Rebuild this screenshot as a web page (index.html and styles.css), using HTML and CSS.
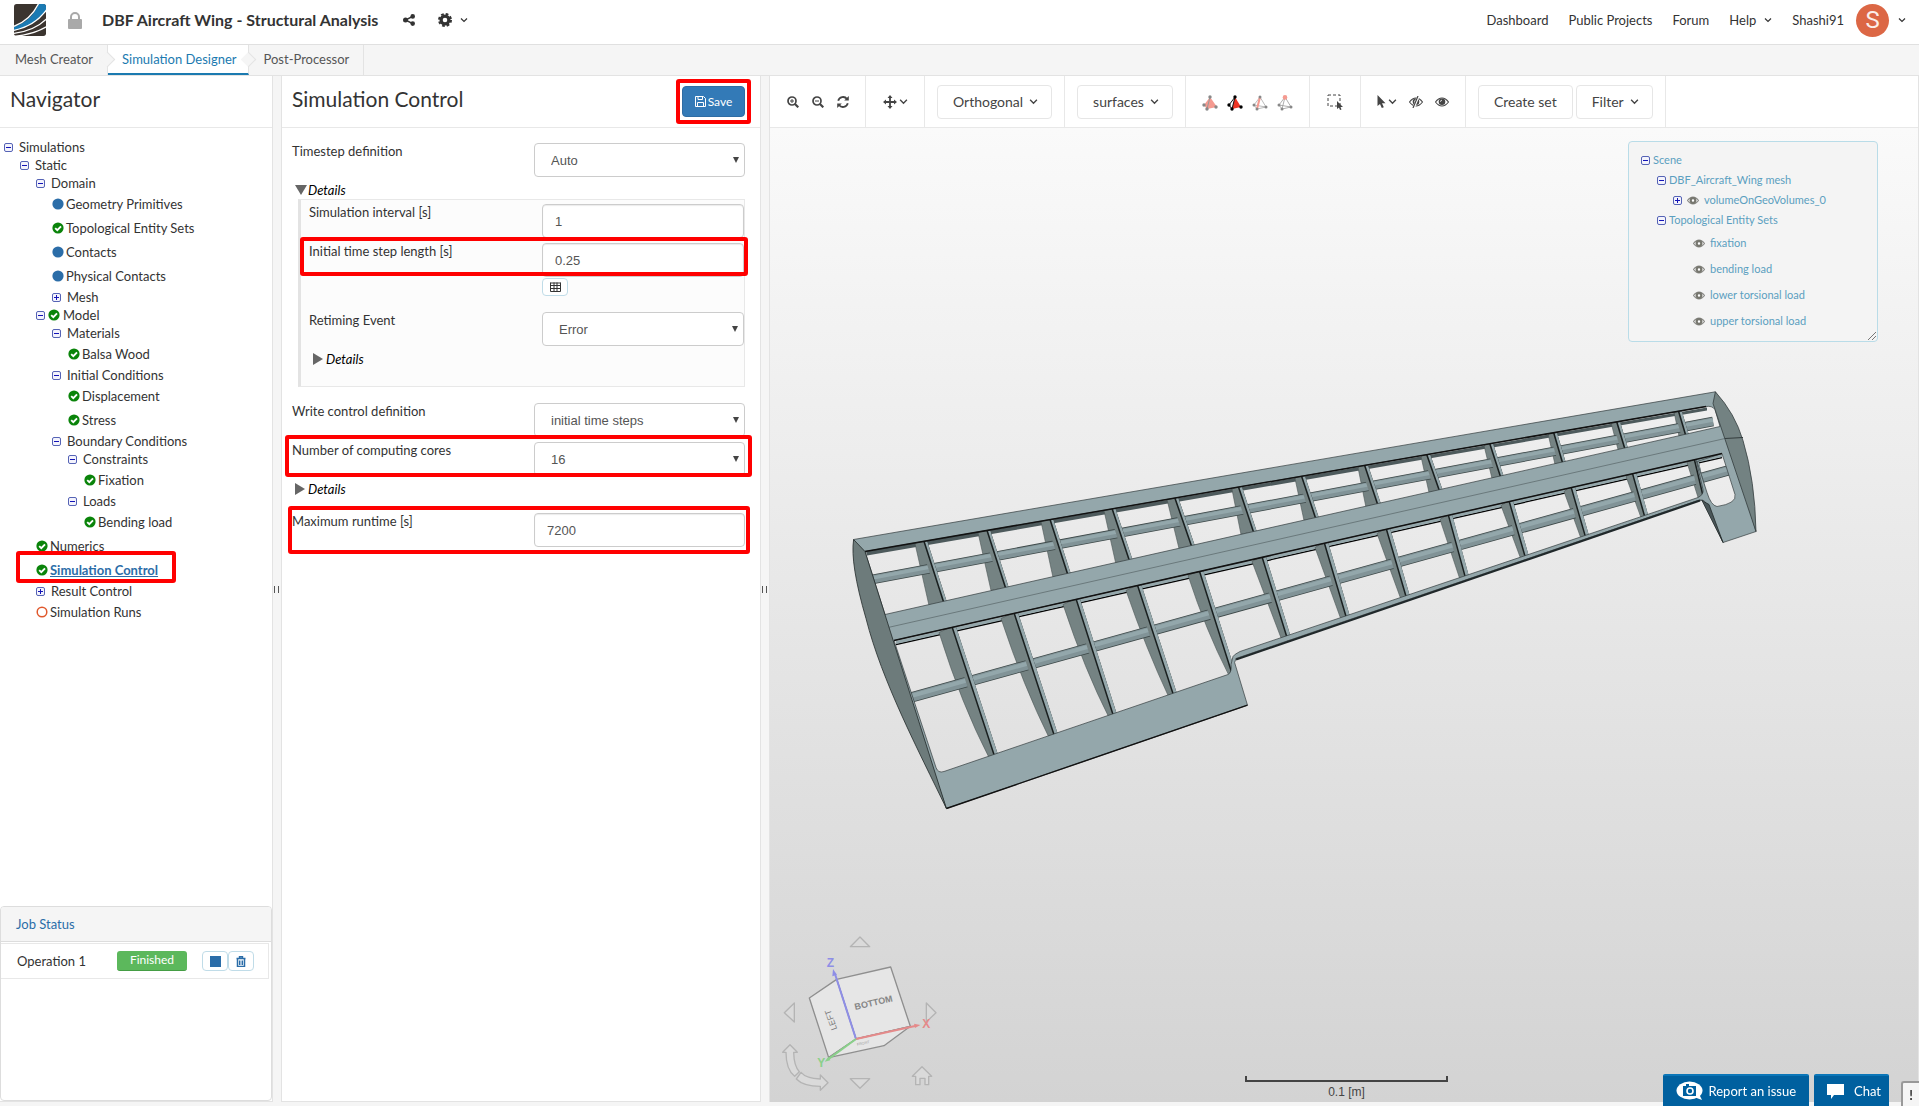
FILE: index.html
```html
<!DOCTYPE html>
<html lang="en">
<head>
<meta charset="utf-8">
<title>DBF Aircraft Wing - Structural Analysis</title>
<link rel="stylesheet" href="styles.css">
</head>
<body>
<svg class="sprite" width="0" height="0" aria-hidden="true">
  <symbol id="chev" viewBox="0 0 8 8"><path d="M1 2.5 4 5.5 7 2.5" fill="none" stroke="currentColor" stroke-width="1.2"/></symbol>
  <symbol id="minus" viewBox="0 0 9 9"><rect x=".5" y=".5" width="8" height="8" rx="1.5" fill="#f3f3fc" stroke="#5563b5"/><path d="M2 4.5h5" stroke="#1414b8"/></symbol>
  <symbol id="plus" viewBox="0 0 9 9"><rect x=".5" y=".5" width="8" height="8" rx="1.5" fill="#f3f3fc" stroke="#5563b5"/><path d="M2 4.5h5M4.5 2v5" stroke="#1414b8"/></symbol>
  <symbol id="ok" viewBox="0 0 12 12"><circle cx="6" cy="6" r="5.6" fill="#0a840a"/><path d="M3.2 6.1 5.3 8.1 9 4.3" fill="none" stroke="#fff" stroke-width="1.9"/></symbol>
  <symbol id="dot" viewBox="0 0 12 12"><circle cx="6" cy="6" r="5.6" fill="#2b6da8"/></symbol>
  <symbol id="ring" viewBox="0 0 12 12"><circle cx="6" cy="6" r="4.8" fill="none" stroke="#e0582c" stroke-width="1.5"/></symbol>
  <symbol id="eye" viewBox="0 0 14 10"><path d="M.5 5Q3.500 1 7 1T13.500 5Q10.500 9 7 9T.5 5Z" fill="none" stroke="currentColor" stroke-width="1.100"/><circle cx="7" cy="4.800" r="3.300" fill="currentColor"/><path d="M5.500 4.800A1.500 1.500 0 0 1 7 3.200" fill="none" stroke="#fff" stroke-width=".8"/></symbol>
  <symbol id="eyes" viewBox="0 0 14 10"><path d="M.5 5Q3.500 1 7 1T13.500 5Q10.500 9 7 9T.5 5Z" fill="none" stroke="#8a8a86" stroke-width="1.300"/><circle cx="7" cy="5" r="2.700" fill="#fff" stroke="#77776f" stroke-width="2.600"/></symbol>
</svg>

<header class="topbar">
  <a href="#" class="logo" aria-label="Home"><svg width="32" height="32" viewBox="0 0 96 96"><defs><clipPath id="lc"><rect width="96" height="96" rx="8"/></clipPath></defs><g clip-path="url(#lc)"><rect width="96" height="96" fill="#3b342f"/><path d="M0 68Q52 52 74 0H96V18Q64 66 0 79Z" fill="#1a7ab3"/><path d="M0 67Q50 48 74-2" fill="none" stroke="#fff" stroke-width="4"/><path d="M0 79Q62 66 98 17" fill="none" stroke="#fff" stroke-width="4"/><path d="M0 88Q62 80 98 44M0 97Q58 92 98 68" fill="none" stroke="#fff" stroke-width="4"/></g></svg></a>
  <svg class="lock" width="14" height="17" viewBox="0 0 14 17"><rect y="7" width="14" height="10" rx="1" fill="#a9a9a9"/><path d="M3 8V5a4 4 0 0 1 8 0v3" fill="none" stroke="#a9a9a9" stroke-width="2"/></svg>
  <h1>DBF Aircraft Wing - Structural Analysis</h1>
  <button class="plain share" aria-label="Share"><svg width="12" height="12" viewBox="0 0 12 12" fill="#333"><circle cx="2.500" cy="6" r="2.500"/><circle cx="9.700" cy="2.400" r="2.300"/><circle cx="9.700" cy="9.600" r="2.300"/><path d="M9.700 2.400 2.500 6l7.200 3.600" fill="none" stroke="#333" stroke-width="1.500"/></svg></button>
  <button class="plain gear" aria-label="Settings"><svg width="14" height="14" viewBox="0 0 14 14"><circle cx="7" cy="7" r="3.900" fill="none" stroke="#333" stroke-width="3.200"/><circle cx="7" cy="7" r="6" fill="none" stroke="#333" stroke-width="2" stroke-dasharray="2.700 2.012"/></svg><svg class="c" width="8" height="8"><use href="#chev"/></svg></button>
  <nav class="links">
    <a href="#">Dashboard</a><a href="#">Public Projects</a><a href="#">Forum</a><a href="#" class="help">Help <svg width="8" height="8"><use href="#chev"/></svg></a><a href="#" class="user">Shashi91 <span class="avatar">S</span><svg width="8" height="8"><use href="#chev"/></svg></a>
  </nav>
</header>

<nav class="tabs">
  <a href="#">Mesh Creator</a>
  <a href="#" class="on">Simulation Designer</a>
  <a href="#">Post-Processor</a>
</nav>

<main class="work">
  <aside class="panel nav">
    <h2 class="head">Navigator</h2>
    <ul class="tree">
      <li><div class="r"><svg><use href="#minus"/></svg>Simulations</div>
      <ul>
        <li><div class="r"><svg><use href="#minus"/></svg>Static</div>
        <ul>
          <li><div class="r"><svg><use href="#minus"/></svg>Domain</div>
          <ul>
            <li class="leaf"><svg><use href="#dot"/></svg>Geometry Primitives</li>
            <li class="leaf"><svg><use href="#ok"/></svg>Topological Entity Sets</li>
            <li class="leaf"><svg><use href="#dot"/></svg>Contacts</li>
            <li class="leaf"><svg><use href="#dot"/></svg>Physical Contacts</li>
            <li><div class="r"><svg><use href="#plus"/></svg>Mesh</div></li>
          </ul></li>
          <li><div class="r model"><svg><use href="#minus"/></svg><svg class="st"><use href="#ok"/></svg>Model</div>
          <ul>
            <li><div class="r"><svg><use href="#minus"/></svg>Materials</div>
              <ul><li class="leaf"><svg><use href="#ok"/></svg>Balsa Wood</li></ul></li>
            <li><div class="r"><svg><use href="#minus"/></svg>Initial Conditions</div>
              <ul><li class="leaf"><svg><use href="#ok"/></svg>Displacement</li><li class="leaf"><svg><use href="#ok"/></svg>Stress</li></ul></li>
            <li><div class="r"><svg><use href="#minus"/></svg>Boundary Conditions</div>
              <ul>
                <li><div class="r"><svg><use href="#minus"/></svg>Constraints</div><ul><li class="leaf"><svg><use href="#ok"/></svg>Fixation</li></ul></li>
                <li><div class="r"><svg><use href="#minus"/></svg>Loads</div><ul><li class="leaf"><svg><use href="#ok"/></svg>Bending load</li></ul></li>
              </ul></li>
          </ul></li>
          <li class="leaf"><svg><use href="#ok"/></svg>Numerics</li>
          <li class="leaf"><svg><use href="#ok"/></svg><a href="#" class="cur">Simulation Control</a><span class="mark m-nav"></span></li>
          <li><div class="r"><svg><use href="#plus"/></svg>Result Control</div></li>
          <li class="leaf"><svg><use href="#ring"/></svg>Simulation Runs</li>
        </ul></li>
      </ul></li>
    </ul>
    <section class="jobs">
      <h3>Job Status</h3>
      <div class="job"><span class="op">Operation 1</span><span class="badge">Finished</span>
        <button class="mini" aria-label="Stop"><svg width="11" height="11"><rect width="11" height="11" fill="#2b6da8"/></svg></button><button class="mini" aria-label="Delete"><svg width="10" height="11" viewBox="0 0 10 11"><path d="M.5 2.500h9M3.500 2.500V.7h3v1.800" fill="none" stroke="#2b6da8" stroke-width="1.400"/><path d="M1.500 3v7.400h7V3M3.700 4.500v4.500M6.300 4.500v4.500" fill="none" stroke="#2b6da8" stroke-width="1.500"/></svg></button>
      </div>
    </section>
  </aside>
  <div class="split"></div>

  <section class="panel sim">
    <div class="head"><h2>Simulation Control</h2>
      <div class="savebox"><button class="save"><svg width="11" height="11" viewBox="0 0 11 11" fill="none" stroke="#fff"><path d="M.5.5h8l2 2v8H.5zM2.500 10.500v-4h6v4M3 .5v3h4.500v-3"/></svg>Save</button><span class="mark m-save"></span></div>
    </div>
    <form class="form">
      <div class="row"><label for="ts">Timestep definition</label><span class="sel"><select id="ts"><option>Auto</option></select></span></div>
      <div class="det"><i class="down"></i>Details</div>
      <div class="box">
        <div class="row"><label for="si">Simulation interval [s]</label><input id="si" value="1"></div>
        <div class="row"><label for="it">Initial time step length [s]</label><input id="it" value="0.25"><span class="mark m-it"></span></div>
        <div class="tb"><button type="button" class="mini" aria-label="Table"><svg width="11" height="10" viewBox="0 0 11 10" fill="none" stroke="#333"><path d="M.5 1h10M.5 3.500h10M.5 6.500h10M.5 9.500h10M.5.5v9M4 .5v9M7 .5v9M10.500.5v9"/></svg></button></div>
        <div class="row"><label for="re">Retiming Event</label><span class="sel"><select id="re"><option>Error</option></select></span></div>
        <div class="det"><i></i>Details</div>
      </div>
      <div class="row"><label for="wc">Write control definition</label><span class="sel"><select id="wc"><option>initial time steps</option></select></span></div>
      <div class="row"><label for="nc">Number of computing cores</label><span class="sel"><select id="nc"><option>16</option></select></span><span class="mark m-nc"></span></div>
      <div class="det cores"><i></i>Details</div>
      <div class="row"><label for="mr">Maximum runtime [s]</label><input id="mr" value="7200"><span class="mark m-mr"></span></div>
    </form>
  </section>
  <div class="split"></div>

  <section class="view">
    <div class="tools">
      <div class="g g1">
        <button class="plain" aria-label="Zoom in"><svg width="12" height="12" viewBox="0 0 12 12" fill="none" stroke="#444"><circle cx="5" cy="5" r="4" stroke-width="1.700"/><path d="M8 8l3.300 3.300" stroke-width="2.200"/><path d="M3 5h4M5 3v4"/></svg></button>
        <button class="plain" aria-label="Zoom out"><svg width="12" height="12" viewBox="0 0 12 12" fill="none" stroke="#444"><circle cx="5" cy="5" r="4" stroke-width="1.700"/><path d="M8 8l3.300 3.300" stroke-width="2.200"/><path d="M3 5h4"/></svg></button>
        <button class="plain" aria-label="Refresh"><svg width="12" height="12" viewBox="0 0 12 12" fill="none" stroke="#444" stroke-width="1.800"><path d="M1.200 4.800A5 5 0 0 1 10 3M10.800 7.200A5 5 0 0 1 2 9"/><path d="M11.800 0v4.600H7.200zM.2 12V7.400h4.600z" fill="#444" stroke="none"/></svg></button>
      </div>
      <div class="g g2"><button class="plain" aria-label="Move"><svg width="14" height="14" viewBox="0 0 14 14"><path d="M7 2v10M2 7h10" stroke="#444" stroke-width="1.800"/><path d="M7 0l2.500 3h-5zM7 14l2.500-3h-5zM0 7l3-2.500v5zM14 7l-3-2.500v5z" fill="#444"/></svg><svg width="9" height="9"><use href="#chev"/></svg></button></div>
      <div class="g"><button class="btn drop">Orthogonal<svg width="9" height="9"><use href="#chev"/></svg></button></div>
      <div class="g"><button class="btn drop">surfaces<svg width="9" height="9"><use href="#chev"/></svg></button></div>
      <div class="g g4">
        <button class="plain" aria-label="Volumes"><svg width="16" height="16" viewBox="0 0 16 16"><path d="M8 2 2 10l3 4 10-2z" fill="#f59a90"/><path d="M8 2 5 14" stroke="#999"/><g fill="#888"><circle cx="8" cy="2" r="1.700"/><circle cx="2" cy="10" r="1.700"/><circle cx="5" cy="14" r="1.700"/><circle cx="14" cy="12" r="1.700"/></g></svg></button>
        <button class="plain" aria-label="Faces"><svg width="16" height="16" viewBox="0 0 16 16"><path d="M8 2 5 14l9-2z" fill="#ee3423"/><path d="M8 2 2 10l3 4z" fill="none" stroke="#111"/><g fill="#000"><circle cx="8" cy="2" r="1.700"/><circle cx="2" cy="10" r="1.700"/><circle cx="5" cy="14" r="1.700"/><circle cx="14" cy="12" r="1.700"/></g></svg></button>
        <button class="plain" aria-label="Edges"><svg width="16" height="16" viewBox="0 0 16 16"><path d="M8 2 2 10l3 4 9-2zM2 10l12 2" fill="none" stroke="#aaa" stroke-width=".8"/><path d="M8 2 5 14" stroke="#f59a90" stroke-width="2"/><g fill="#888"><circle cx="8" cy="2" r="1.500"/><circle cx="2" cy="10" r="1.500"/><circle cx="5" cy="14" r="1.500"/><circle cx="14" cy="12" r="1.500"/></g></svg></button>
        <button class="plain" aria-label="Nodes"><svg width="16" height="16" viewBox="0 0 16 16"><path d="M8 2 2 10l3 4 9-2zM2 10l12 2M8 2 5 14" fill="none" stroke="#999" stroke-width=".8"/><g fill="#888"><circle cx="2" cy="10" r="1.500"/><circle cx="5" cy="14" r="1.500"/><circle cx="14" cy="12" r="1.500"/></g><circle cx="8" cy="2.400" r="2.300" fill="#f59a90"/></svg></button>
      </div>
      <div class="g g5"><button class="plain" aria-label="Box select"><svg width="16" height="16" viewBox="0 0 16 16"><rect x="1" y="1" width="12" height="11" fill="none" stroke="#444" stroke-dasharray="3 2"/><path d="M10 7v8l2-1.500 1 2.500 1.500-.6-1-2.400H16z" fill="#444"/></svg></button></div>
      <div class="g g6">
        <button class="plain" aria-label="Pick"><svg width="9" height="13" viewBox="0 0 9 13"><path d="M.5 0v11L3 9l1.800 4 2-.8L5 8.200h3.500z" fill="#444"/></svg><svg width="9" height="9"><use href="#chev"/></svg></button>
        <button class="plain" aria-label="Hide"><svg width="14" height="12" viewBox="0 -1 14 12" color="#444"><use href="#eye" width="14" height="10"/><path d="M9.500-1 4.500 11" stroke="#fff" stroke-width="2.500"/><path d="M9-1 4 11" stroke="#444" stroke-width="1.200"/></svg></button>
        <button class="plain" aria-label="Show"><svg width="14" height="10"><use href="#eye"/></svg></button>
      </div>
      <div class="g g7"><button class="btn">Create set</button><button class="btn drop">Filter<svg width="9" height="9"><use href="#chev"/></svg></button></div>
    </div>
    <div class="canvas">
      <svg class="wing" viewBox="770 128 1148 973" role="img" aria-label="Wing mesh">
        <defs>
          <path id="ur" d="M923 537 944 602M986 526 1006 588M1049 515 1068 574M1111 504 1130 561M1174 494 1192 546M1238 484 1254 532M1301 473 1316 518M1364 462 1378 504M1426 451 1440 491M1489 440 1501 477M1553 429 1563 463M1616 418 1625 448M1678 408 1686 435"/>
          <path id="lr" d="M952 625 995 756M1014 611 1055 736M1076 597 1114 716M1137 582 1174 695M1199 568 1233 675M1262 555 1288 639M1324 540 1347 618M1386 526 1407 598M1448 512 1466 578M1509 499 1526 558M1571 485 1586 537M1632 470 1645 516M1694 456 1703 494"/>
        </defs>
        <path d="M866 551 1707 407V410L867 555Z" fill="#4d5a5c"/>
        <path d="M896 644 1722 457" stroke="#000" stroke-width="1.500"/><path d="M896 642 1722 455" stroke="#94a7ab" stroke-width="3"/>
        <g fill="#758383" stroke="#4b5656" stroke-width=".6">
          <path d="M924 538 915 543 929 605 943 602ZM987 527 978 532 991 590 1005 587ZM1050 516 1041 521 1053 577 1067 573ZM1112 505 1104 510 1116 564 1129 560ZM1175 494 1167 499 1179 548 1191 546ZM1239 484 1232 489 1241 534 1253 531ZM1302 473 1295 478 1304 520 1315 517ZM1365 462 1358 467 1366 507 1377 503ZM1427 451 1421 456 1429 492 1439 490ZM1490 440 1484 445 1492 478 1500 476ZM1554 429 1548 433 1555 464 1562 462ZM1617 418 1611 422 1618 449 1624 447ZM1679 408 1674 411 1679 436 1685 434Z"/>
          <path d="M952 626 939 632Q962 705 989 757H995ZM1014 612 1001 618Q1024 687 1049 737H1055ZM1076 598 1063 604Q1085 670 1109 717H1114ZM1138 584 1126 590Q1146 648 1169 697H1174ZM1200 570 1188 575Q1206 630 1228 673H1233ZM1263 555 1252 561 1282 640H1288ZM1325 541 1315 547 1341 619H1347ZM1387 527 1377 533 1401 599H1406ZM1449 513 1440 519 1460 579H1466ZM1510 499 1501 505 1521 559H1526ZM1572 485 1564 491 1581 538H1586ZM1633 470 1626 476 1641 517H1646ZM1694 456 1687 462 1699 500H1703Z"/>
        </g>
        <path d="M872 579 1713 421" stroke="#3d4848" stroke-width="9.500"/><path d="M872 579 1713 421" stroke="#819397" stroke-width="8"/><path d="M872 577.500 1713 419.500" stroke="#93a7ab" stroke-width="3.500"/>
        <path d="M911 697 1728 470" stroke="#3d4848" stroke-width="10.500"/><path d="M911 697 1728 470" stroke="#819397" stroke-width="9"/><path d="M911 695.500 1728 468.500" stroke="#93a7ab" stroke-width="4"/>
        <g fill="none">
          <use href="#ur" x="-2" stroke="#758383" stroke-width="5"/><use href="#lr" x="-2" stroke="#758383" stroke-width="5"/>
          <use href="#ur" x="1" stroke="#1a2020" stroke-width="4"/><use href="#lr" x="1.200" stroke="#1a2020" stroke-width="4.500"/>
          <use href="#ur" x="1.800" stroke="#94a7ab" stroke-width="2.400"/><use href="#lr" x="2" stroke="#94a7ab" stroke-width="3"/>
        </g>
        <path fill-rule="evenodd" fill="#94a7ab" stroke="#333c3d" stroke-width=".7" d="M853.600 539 1715.400 391.300 1756 531 1723 542 1706 503Q1704 498 1698 500L1236 658 1234.600 662 1247.500 704.700 946.400 808ZM865 551 885 614 1720 426 1715 409Q1712 405 1706 406ZM894 640 936 767Q938 773 944 771L1228 674Q1232 672 1231 664L1233 656Q1234 654 1240 651L1698 497Q1704 494 1703 489L1696 459ZM1697 461 1707 492Q1711 505 1717 506 1737 503 1735 494L1722 453Z"/>
        <path d="M894 640 1722 453" stroke="#111" stroke-width="1.500"/><path d="M865 551 1706 406" stroke="#111" stroke-width="1.500"/>
        <path d="M888 627 1725 438" stroke="#5f6d70" stroke-width=".8"/>
        <path d="M1236 659 1700 500" stroke="#20282a" stroke-width="2.200"/>
        <path d="M946.400 808 1247.500 704.700" stroke="#111" stroke-width="1.400"/>
        <path d="M853.600 539Q850 563 866 618C882 681 918 749 946.400 808L865 551Z" fill="#6d7b7b" stroke="#222a2a" stroke-width=".8"/>
        <path d="M1715.400 391.300Q1735 413 1743 440 1755 480 1756 531L1713 403Z" fill="#738282" stroke="#333c3d" stroke-width=".8"/><path d="M1725 438 1743 437" stroke="#333c3d"/>
        <path d="M1702 500 1723 542 1709 504Z" fill="#4a5658" stroke="#222a2a" stroke-width=".8"/>
      </svg>

      <div class="scene">
        <div class="n"><svg><use href="#minus"/></svg>Scene</div>
        <div class="n l1"><svg><use href="#minus"/></svg>DBF_Aircraft_Wing mesh</div>
        <div class="n l2"><svg><use href="#plus"/></svg><svg class="e"><use href="#eyes"/></svg>volumeOnGeoVolumes_0</div>
        <div class="n l1"><svg><use href="#minus"/></svg>Topological Entity Sets</div>
        <div class="n l3"><svg class="e"><use href="#eyes"/></svg>fixation</div>
        <div class="n l3"><svg class="e"><use href="#eyes"/></svg>bending load</div>
        <div class="n l3"><svg class="e"><use href="#eyes"/></svg>lower torsional load</div>
        <div class="n l3"><svg class="e"><use href="#eyes"/></svg>upper torsional load</div>
        <svg class="grip" width="8" height="8"><path d="M0 8 8 0M4 8l4-4" stroke="#777"/></svg>
      </div>

      <svg class="cube" viewBox="60 70 480 480" role="img" aria-label="Orientation cube">
        <g fill="#dadada" stroke="#b4b4b4" stroke-width="4" stroke-linejoin="round"><path d="M271 111 300 82 329 111ZM271 507H329L300 536ZM103 280V337L73 309ZM499 280V337L528 309Z"/><path d="M457 500 486 471 515 500H506V525H495V506H480V525H467V500Z"/><path d="M90 405 68 428H78Q78 480 104 500L118 486Q102 470 101 428H112ZM123 488Q138 506 181 508V496L204 519 181 542V530Q130 530 109 508Z"/></g>
        <g fill="#e6e6e6" stroke="#8f8f8f" stroke-width="4" stroke-linejoin="round"><path d="M230 209 392 172 451 350 288 388Z"/><path d="M230 209 148 265 206 444 288 388Z"/><path d="M288 388 451 350 372 408 206 444Z"/></g>
        <g font-family="Liberation Sans, sans-serif"><text transform="translate(286 301) rotate(-13)" font-size="27" font-weight="bold" fill="#858585">BOTTOM</text><text transform="translate(232 358) rotate(-110)" font-size="26" fill="#777">LEFT</text><text transform="translate(292 408) rotate(-12)" font-size="11" fill="#999">FRONT</text>
        <path d="M288 388 226 196" stroke="#8e8ee6" stroke-width="6"/><path d="M219 178 217 200 231 195Z" fill="#8e8ee6"/><path d="M288 388 465 349" stroke="#e58a8a" stroke-width="6"/><path d="M481 346 462 342 465 355Z" fill="#e58a8a"/><path d="M288 388 204 449" stroke="#8ad08a" stroke-width="6"/><path d="M194 456 205 441 211 452Z" fill="#8ad08a"/>
        <text x="200" y="171" font-size="36" font-weight="bold" fill="#8e8ee6">Z</text><text x="487" y="354" font-size="36" font-weight="bold" fill="#e58a8a">X</text><text x="172" y="472" font-size="36" font-weight="bold" fill="#8ad08a">Y</text></g>
      </svg>
      <div class="scale"><span></span>0.1 [m]</div>
    </div>
  </section>
</main>

<div class="dock">
  <button class="blue rep"><svg width="27" height="20" viewBox="0 0 27 20"><ellipse cx="13.500" cy="9.500" rx="13" ry="9" fill="#fff"/><path d="M18 16l8 3-3-6z" fill="#fff"/><path d="M7 5h3V3h3v2h7v10H7z" fill="#00609f"/><circle cx="14" cy="10" r="3" fill="#00609f" stroke="#fff" stroke-width="1.600"/></svg>Report an issue</button>
  <button class="blue chat"><svg width="17" height="15" viewBox="0 0 17 15"><path d="M0 0h17v11H7l-3 4v-4H0z" fill="#fff"/></svg>Chat</button>
  <button class="warn">!</button>
</div>
</body>
</html>
```
FILE: styles.css
```css
* { box-sizing: border-box; }
body { margin: 0; height: 100vh; display: flex; flex-direction: column; background: #f5f5f5; color: #333; font: 13px/18px Lato, sans-serif; overflow: hidden; }
h1, h2, h3, ul { margin: 0; padding: 0; font-weight: normal; list-style: none; }
a { color: inherit; text-decoration: none; }
button, input, select { font: inherit; color: inherit; }
svg { flex: none; display: block; }
.sprite { position: absolute; }
.plain { border: 0; background: none; padding: 0; display: flex; align-items: center; }

.topbar { flex: none; height: 45px; padding: 0 13px 4px 14px; display: flex; align-items: center; background: #fff; border-bottom: 1px solid #e0e0e0; }
.lock { margin: 0 20px 0 22px; }
h1 { font-size: 16px; font-weight: bold; line-height: 20px; }
.share { margin-left: 25px; }
.gear { margin-left: 23px; gap: 8px; }
.links { margin-left: auto; display: flex; align-items: center; gap: 20px; }
.help { display: flex; align-items: center; gap: 8px; }
.user { display: flex; align-items: center; gap: 12px; }
.user svg { margin-left: -3px; }
.avatar { width: 33px; height: 33px; border-radius: 50%; background: #dc6745; color: #fbeee9; font: 24px/33px Roboto, sans-serif; text-align: center; }

.tabs { flex: none; height: 31px; display: flex; border-bottom: 1px solid #e3e3e3; color: #555; }
.tabs a { position: relative; padding: 5px 14px 5px 15px; border-right: 1px solid #e3e3e3; }
.tabs .on { background: #fff; color: #1b7ab0; border-bottom: 2px solid #1b7ab0; padding: 5px 11px 5px 14px; }
.tabs a:not(:last-child)::after { content: ""; position: absolute; top: 9px; right: -6px; width: 10px; height: 10px; border: solid #e3e3e3; border-width: 1px 1px 0 0; background: #f5f5f5; transform: rotate(45deg); z-index: 1; }
.tabs .on::after { background: #fff; }

.work { flex: 1; min-height: 0; display: flex; padding: 0 0 4px; }
.panel { background: #fff; border: 1px solid #e3e3e3; border-top: 0; display: flex; flex-direction: column; }
.nav { width: 273px; border-left: 0; }
.sim { width: 480px; }
.split { width: 8px; display: flex; align-items: center; justify-content: center; }
.split::before { content: ""; width: 3px; height: 7px; margin-right: 2px; border: solid #555; border-width: 0 1px; }
.head { flex: none; height: 52px; border-bottom: 1px solid #e8e8e8; padding: 0 10px; display: flex; align-items: center; justify-content: space-between; font-size: 21px; line-height: 26px; }
.sim .head { padding: 0 15px 0 10px; }
.head h2 { font-size: 21px; }
.nav .head, .sim .head h2 { padding-bottom: 6px; }

.tree { padding: 10px 0 0 4px; }
.tree ul { padding-left: 16px; }
.r { height: 18px; display: flex; align-items: center; gap: 6px; }
.r svg { width: 9px; height: 9px; }
.model { gap: 3px; }
.r .st, .leaf svg { width: 12px; height: 12px; }
.leaf { position: relative; height: 24px; display: flex; align-items: center; gap: 2px; }
.cur { color: #2b6da8; font-weight: bold; text-decoration: underline; }
.mark { position: absolute; border: 4px solid #f00; border-radius: 3px; pointer-events: none; }
.m-nav { left: -20px; top: -7px; width: 160px; height: 32px; }

.jobs { margin-top: auto; height: 195px; width: 272px; border: 1px solid #ddd; border-radius: 4px; overflow: hidden; }
.jobs h3 { height: 35px; padding: 8px 15px; font-size: 13px; background: #f5f5f5; border-bottom: 1px solid #ddd; color: #2b6da8; }
.job { margin: 1px 2px 0 0; height: 36px; padding-left: 16px; display: flex; align-items: center; border: solid #e8e8e8; border-width: 1px 1px 1px 0; }
.op { width: 100px; }
.badge { width: 70px; height: 20px; margin-right: 15px; border-radius: 3px; background: #5cb85c; border-bottom: 1px solid #449d44; color: #fff; font-size: 12px; text-align: center; }
.mini { width: 26px; height: 20px; padding: 0; display: flex; align-items: center; justify-content: center; background: #fff; border: 1px solid #c0dce8; border-radius: 4px; }

.savebox { position: relative; }
.save { width: 63px; height: 31px; display: flex; align-items: center; justify-content: center; gap: 2px; padding: 0; background: #337ab7; border: 1px solid #2e6da4; border-radius: 4px; color: #fff; font-size: 12px; }
.m-save { inset: -7px -6px; }
.form { padding: 15px 15px 0 10px; display: flex; flex-direction: column; }
.row { position: relative; display: grid; grid-template-columns: 1fr 211px; height: 39px; line-height: 16px; }
.box .row { grid-template-columns: 1fr 202px; }
.form input, .form select { width: 100%; height: 34px; padding: 0 12px; border: 1px solid #ccc; border-radius: 4px; background: #fff; color: #555; font: 13px "Liberation Sans", sans-serif; }
.form input { box-shadow: inset 0 1px 1px #ececec; }
.form select { appearance: none; padding: 0 16px; }
.sel { position: relative; height: 34px; }
.sel::after { content: ""; position: absolute; right: 6px; top: 14px; border: solid transparent; border-width: 6px 3px 0; border-top-color: #444; }
.det { display: flex; align-items: center; height: 17px; gap: 3px; padding: 0 0 2px 3px; font-style: italic; color: #000; }
.det i { width: 0; height: 0; border: solid transparent; border-width: 6px 0 6px 10px; border-left-color: #666; }
.det i.down { border-width: 10px 6px 0; border-color: #666 transparent transparent; margin-right: -2px; }
.cores { margin-bottom: 15px; }
.box { margin: 0 0 16px 6px; padding: 4px 0 0 8px; height: 188px; background: #fcfcfc; border: 1px solid #e8e8e8; border-left: 3px solid #e3e3e3; }
.box .det { padding-left: 4px; }
.tb { height: 30px; padding-right: 176px; display: flex; justify-content: flex-end; }
.tb .mini { height: 18px; margin-top: -4px; }
.m-it { left: -9px; right: -4px; top: -6px; height: 39px; }
.m-nc { left: -7px; right: -7px; top: -7px; height: 42px; }
.m-mr { left: -4px; right: -5px; top: -7px; height: 48px; }

.view { flex: 1; min-width: 0; display: flex; flex-direction: column; border: 1px solid #e3e3e3; border-width: 0 1px 0 1px; }
.tools { flex: none; height: 52px; display: flex; background: #fff; border-bottom: 1px solid #e8e8e8; color: #444; }
.g { display: flex; align-items: center; padding: 0 12px; border-right: 1px solid #e8e8e8; gap: 3px; }
.g1 { padding: 0 17px; gap: 13px; width: 96px; }
.g2 { padding: 0 17px; width: 59px; }
.g4 { padding: 2px 16px 0; gap: 9px; }
.g5 { padding: 0 17px; }
.g6 { padding: 0 16px; gap: 12px; }
.g6 .plain, .g2 .plain { gap: 2px; }
.btn { height: 34px; padding: 0 15px; display: flex; align-items: center; gap: 6px; background: #fff; border: 1px solid #e6e6e6; border-radius: 4px; font-size: 14px; }
.drop { padding-right: 13px; }
.canvas { position: relative; flex: 1; min-height: 0; background: linear-gradient(#fafafa, #d3d3d3); }
.wing { position: absolute; inset: 0; width: 100%; height: 100%; }
.scene { position: absolute; top: 13px; right: 40px; width: 250px; height: 201px; padding: 8px 12px; border: 1px solid #b9dce8; border-radius: 4px; background: #f4f4f4; color: #5b9fc0; font-size: 11px; }
.n { height: 20px; display: flex; align-items: center; gap: 3px; }
.n svg { width: 9px; height: 9px; }
.n .e { width: 12px; height: 9px; margin: 0 2px; }
.l1 { padding-left: 16px; }
.l2 { padding-left: 32px; }
.l3 { padding-left: 50px; height: 26px; }
.scene .grip { position: absolute; right: 1px; bottom: 1px; }
.cube { position: absolute; left: 10px; bottom: 9px; width: 160px; height: 160px; }
.scale { position: absolute; left: 475px; bottom: 0; width: 203px; text-align: center; font: 12px/20px "Liberation Sans", sans-serif; color: #444; }
.scale span { display: block; height: 6px; border: 2px solid #444; border-top: 0; }

.dock { position: fixed; right: 0; bottom: 0; display: flex; align-items: flex-end; gap: 5px; }
.blue { height: 32px; padding: 0 13px; display: flex; align-items: center; gap: 10px; border: 0; border-top: 2px solid #0b76b8; border-radius: 2px 2px 0 0; background: #00609f; color: #fff; }
.rep { gap: 6px; }
.chat { padding-right: 8px; }
.warn { margin-left: 7px; width: 18px; height: 25px; padding: 0; border: 2px solid #999; border-width: 2px 0 0 2px; border-radius: 3px 0 0; background: #f5f5f5; font-weight: bold; }
```
